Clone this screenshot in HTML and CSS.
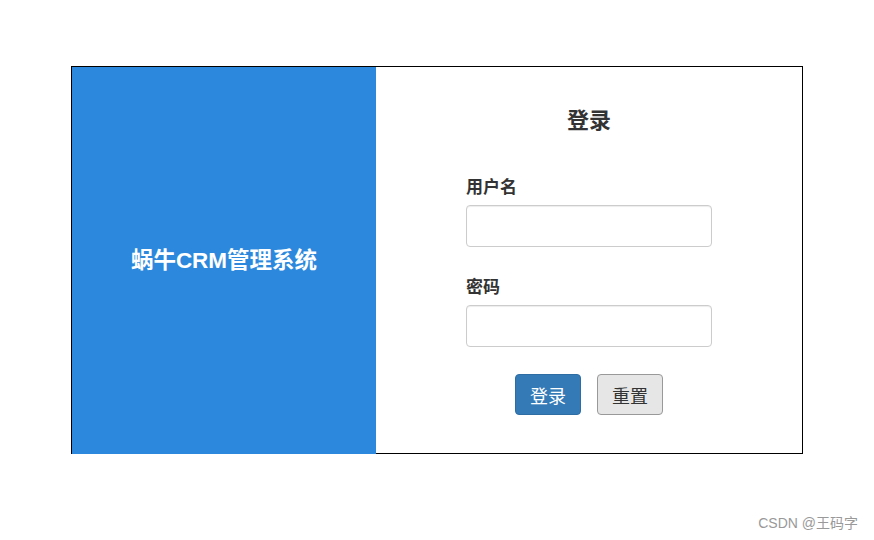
FILE: index.html
```html
<!DOCTYPE html>
<html lang="zh-CN">
<head>
  <meta charset="UTF-8">
  <meta name="viewport" content="width=device-width, initial-scale=1.0">
  <title>蜗牛CRM管理系统 - 登录</title>
  <link rel="stylesheet" href="styles.css">
</head>
<body>
<div class="login-box">
  <div class="brand">
    <h1>蜗牛CRM管理系统</h1>
  </div>
  <div class="login-panel">
    <h2>登录</h2>
    <form class="login-form">
      <div class="form-group">
        <label for="username">用户名</label>
        <input type="text" id="username" name="username">
      </div>
      <div class="form-group">
        <label for="password">密码</label>
        <input type="password" id="password" name="password">
      </div>
      <div class="btn-row">
        <button type="button" class="btn btn-primary">登录</button>
        <button type="reset" class="btn btn-default">重置</button>
      </div>
    </form>
  </div>
</div>
<div class="watermark">CSDN @王码字</div>
</body>
</html>
```

FILE: styles.css
```css
body {
  margin: 0;
  font-family: "Liberation Sans", "Noto Sans CJK SC", sans-serif;
  color: #333;
  background: #fff;
}
.login-box {
  display: flex;
  width: 730px;
  height: 386px;
  margin: 66px 0 0 71px;
  border: 1px solid #000;
}
.brand {
  width: 304px;
  height: 388px;
  flex-shrink: 0;
  background-color: #2b88dd;
  display: flex;
  align-items: center;
  justify-content: center;
}
.brand h1 {
  margin: 0 0 6px;
  color: #fff;
  font-size: 22.5px;
  font-weight: bold;
}
.login-panel {
  flex: 1;
  display: flex;
  flex-direction: column;
  align-items: center;
  padding-top: 38px;
}
.login-panel h2 {
  margin: 0;
  font-size: 22px;
  line-height: 31px;
  font-weight: bold;
}
.login-form {
  width: 246px;
  margin-top: 41px;
}
.form-group {
  margin-bottom: 30px;
}
.form-group label {
  display: block;
  font-size: 17px;
  line-height: 22px;
  font-weight: bold;
}
.form-group input {
  display: block;
  box-sizing: border-box;
  width: 100%;
  height: 42px;
  margin-top: 6px;
  padding: 6px 12px;
  font-size: 16px;
  border: 1px solid #ccc;
  border-radius: 4px;
  box-shadow: inset 0 1px 1px rgba(0, 0, 0, 0.075);
}
.btn-row {
  display: flex;
  justify-content: center;
  gap: 16px;
  margin-top: -3px;
}
.btn {
  width: 66px;
  height: 41px;
  padding: 0;
  font-family: inherit;
  font-size: 18px;
  border-radius: 4px;
  border: 1px solid;
  cursor: pointer;
}
.btn-primary {
  background-color: #337ab7;
  border-color: #2e6da4;
  color: #fff;
}
.btn-default {
  background-color: #e6e6e6;
  border-color: #999;
  color: #333;
}
.watermark {
  position: absolute;
  right: 16px;
  bottom: 8px;
  font-size: 14px;
  color: #999;
}
```
